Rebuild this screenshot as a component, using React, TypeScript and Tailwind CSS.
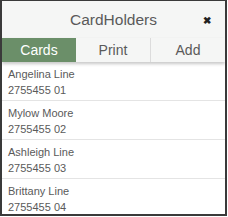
import React from "react";

const people = [
  { name: "Angelina Line", num: "2755455 01" },
  { name: "Mylow Moore", num: "2755455 02" },
  { name: "Ashleigh Line", num: "2755455 03" },
  { name: "Brittany Line", num: "2755455 04" },
];

export default function App() {
  return (
    <div className="w-[228px] h-[217px] bg-white" style={{ fontFamily: '"Liberation Sans", Arial, sans-serif' }}>
      <div className="w-[227px] h-[216px] border-x-2 border-b-2 border-t border-[#3a3a3a] flex flex-col overflow-hidden bg-white">
        <div className="bg-[#f5f6f5]">
          <div className="relative h-[37px] flex items-center justify-center">
            <span className="text-[15.5px] text-[#5a5a5a] leading-none">CardHolders</span>
            <span className="absolute left-[201px] top-[15px] text-[10px] font-bold text-[#222] leading-none">✖</span>
          </div>
          <div className="relative z-10 flex h-[24px] shadow-[0_2px_3px_rgba(0,0,0,0.22)]">
            <div className="w-[74px] bg-[#6b8f69] text-white text-[14px] flex items-center justify-center">Cards</div>
            <div className="w-[75px] border-r border-[#dcdcdc] text-[#5a5a5a] text-[14px] flex items-center justify-center">Print</div>
            <div className="flex-1 text-[#5a5a5a] text-[14px] flex items-center justify-center">Add</div>
          </div>
        </div>
        <div className="flex flex-col">
          {people.map((p, i) => (
            <div key={p.name} className={`px-[6px] pt-[4px] text-[11px] text-[#5a5a5a] leading-[16px] ${i > 0 ? "border-t border-[#e4e4e4] h-[39px]" : "h-[38px]"}`}>
              <div>{p.name}</div>
              <div>{p.num}</div>
            </div>
          ))}
        </div>
      </div>
    </div>
  );
}
